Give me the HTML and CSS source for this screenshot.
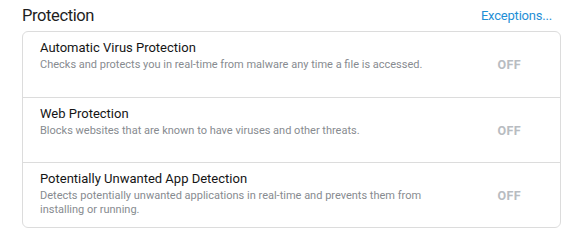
FILE: index.html
```html
<!DOCTYPE html>
<html>
<head>
<meta charset="utf-8">
<link rel="stylesheet" href="styles.css">
</head>
<body>
<div class="page">
  <div class="header">
    <h1 class="title">Protection</h1>
    <a class="link">Exceptions...</a>
  </div>
  <div class="card">
    <div class="row">
      <div class="text">
        <div class="name">Automatic Virus Protection</div>
        <div class="desc">Checks and protects you in real-time from malware any time a file is accessed.</div>
      </div>
      <div class="state">OFF</div>
    </div>
    <div class="row">
      <div class="text">
        <div class="name">Web Protection</div>
        <div class="desc">Blocks websites that are known to have viruses and other threats.</div>
      </div>
      <div class="state">OFF</div>
    </div>
    <div class="row">
      <div class="text">
        <div class="name">Potentially Unwanted App Detection</div>
        <div class="desc">Detects potentially unwanted applications in real-time and prevents them from installing or running.</div>
      </div>
      <div class="state">OFF</div>
    </div>
  </div>
</div>
</body>
</html>
```
FILE: styles.css
```css
html, body { margin: 0; padding: 0; background: #fff; }
body { font-family: Roboto, "Noto Sans", sans-serif; }
.page { padding: 4px 16px 0 22px; width: 539px; }
.header { display: flex; justify-content: space-between; align-items: center; height: 22px; margin-bottom: 5px; }
.title { margin: 0; font-size: 16.5px; font-weight: 400; color: #1e1e1e; letter-spacing: -0.4px; }
.link { font-size: 13px; color: #1f8fd6; margin-right: 9px; margin-top: 1px; letter-spacing: -0.2px; }
.card { border: 1px solid #dcdcdc; border-radius: 6px; }
.row { display: flex; align-items: flex-start; box-sizing: border-box; height: 65px; border-top: 1px solid #dcdcdc; padding: 8px 39px 0 17px; }
.row:first-child { border-top: none; }
.text { flex: 1; padding-right: 40px; }
.name { font-size: 13px; color: #151515; line-height: 16px; }
.desc { font-size: 11px; color: #878b90; line-height: 14px; margin-top: 2px; }
.state { font-size: 12.5px; font-weight: 700; color: #b8bcc1; letter-spacing: 0.4px; margin-top: 17px; line-height: 16px; }
```
